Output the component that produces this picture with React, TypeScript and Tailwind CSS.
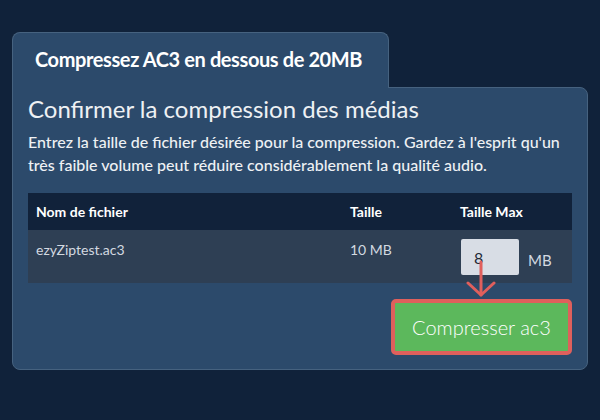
import React from "react";

export default function App() {
  return (
    <div
      className="w-[600px] h-[420px] bg-[#10223a] pt-[32px] px-[12px] relative"
      style={{ fontFamily: "Lato, 'Open Sans', sans-serif" }}
    >
      <div className="w-[377px] h-[56px] bg-[#2c4a6b] border border-b-0 border-[#46627f] rounded-t-[8px] flex items-center pl-[22px] relative z-10">
        <span className="text-[20px] font-bold text-white tracking-[-0.4px] mt-[-4px]">
          Compressez AC3 en dessous de 20MB
        </span>
      </div>
      <div className="-mt-px w-[576px] bg-[#2c4a6b] border border-[#46627f] rounded-b-[8px] rounded-tr-[8px] px-[15px] pt-[4px] pb-[14px]">
        <h2 className="text-[24px] leading-[34px] text-[#eef1f4] font-normal">
          Confirmer la compression des médias
        </h2>
        <p className="mt-[4px] text-[16px] leading-[23px] text-[#eef1f4] font-medium">
          Entrez la taille de fichier désirée pour la compression. Gardez à l'esprit qu'un très faible volume peut réduire considérablement la qualité audio.
        </p>
        <div className="mt-[17px] w-[544px]">
          <div className="flex h-[37px] bg-[#11223a] items-center text-[14px] font-bold text-white">
            <div className="w-[314px] pl-[8px]">Nom de fichier</div>
            <div className="w-[110px] pl-[8px]">Taille</div>
            <div className="w-[120px] pl-[8px]">Taille Max</div>
          </div>
          <div className="flex h-[53px] bg-[#2e3f54] text-[14px] text-[#d3d9e0]">
            <div className="w-[314px] pl-[8px] pt-[9px]">ezyZiptest.ac3</div>
            <div className="w-[110px] pl-[8px] pt-[9px]">10 MB</div>
            <div className="w-[120px] pl-[9px] pt-[9px] flex items-start gap-[9px]">
              <div className="w-[58px] h-[36px] bg-[#d8dde5] rounded-[2px] text-[16px] text-[#1f2937] pl-[13px] pt-[9px] leading-[20px]">
                8
              </div>
              <span className="text-[15px] mt-[10px]">MB</span>
            </div>
          </div>
        </div>
        <div className="flex justify-end mt-[16px]">
          <button className="w-[181px] h-[56px] bg-[#5cb85c] border-[4px] border-[#df605c] rounded-[5px] text-white text-[20px] font-light">
            Compresser ac3
          </button>
        </div>
      </div>
      <svg
        className="absolute left-[466px] top-[260px] w-[30px] h-[38px]"
        viewBox="0 0 30 38"
        fill="none"
        stroke="#e05f5c"
        strokeWidth="3"
        strokeLinecap="round"
        strokeLinejoin="round"
      >
        <line x1="15" y1="2" x2="15" y2="35" />
        <polyline points="2,23 15,35 28,23" />
      </svg>
    </div>
  );
}
